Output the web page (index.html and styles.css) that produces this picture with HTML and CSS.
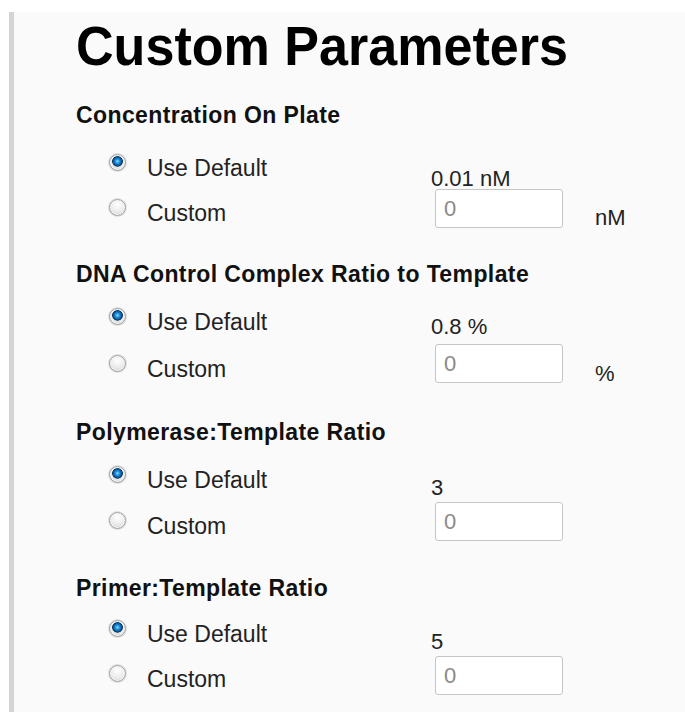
FILE: index.html
```html
<!DOCTYPE html>
<html lang="en">
<head>
<meta charset="utf-8">
<title>Custom Parameters</title>
<link rel="stylesheet" href="styles.css">
</head>
<body>
<div class="panel">
  <h1 class="title">Custom Parameters</h1>

  <section class="param param-conc">
    <h2 class="param-name">Concentration On Plate</h2>
    <div class="param-body">
      <div class="choices">
        <label class="choice"><input class="radio" type="radio" name="conc" checked><span>Use Default</span></label>
        <label class="choice"><input class="radio" type="radio" name="conc"><span>Custom</span></label>
      </div>
      <div class="values">
        <div class="default-value">0.01 nM</div>
        <input class="custom-value" type="text" value="0">
      </div>
      <div class="unit">nM</div>
    </div>
  </section>

  <section class="param param-ctrl">
    <h2 class="param-name">DNA Control Complex Ratio to Template</h2>
    <div class="param-body">
      <div class="choices">
        <label class="choice"><input class="radio" type="radio" name="ctrl" checked><span>Use Default</span></label>
        <label class="choice"><input class="radio" type="radio" name="ctrl"><span>Custom</span></label>
      </div>
      <div class="values">
        <div class="default-value">0.8 %</div>
        <input class="custom-value" type="text" value="0">
      </div>
      <div class="unit">%</div>
    </div>
  </section>

  <section class="param param-poly">
    <h2 class="param-name">Polymerase:Template Ratio</h2>
    <div class="param-body">
      <div class="choices">
        <label class="choice"><input class="radio" type="radio" name="poly" checked><span>Use Default</span></label>
        <label class="choice"><input class="radio" type="radio" name="poly"><span>Custom</span></label>
      </div>
      <div class="values">
        <div class="default-value">3</div>
        <input class="custom-value" type="text" value="0">
      </div>
    </div>
  </section>

  <section class="param param-primer">
    <h2 class="param-name">Primer:Template Ratio</h2>
    <div class="param-body">
      <div class="choices">
        <label class="choice"><input class="radio" type="radio" name="primer" checked><span>Use Default</span></label>
        <label class="choice"><input class="radio" type="radio" name="primer"><span>Custom</span></label>
      </div>
      <div class="values">
        <div class="default-value">5</div>
        <input class="custom-value" type="text" value="0">
      </div>
    </div>
  </section>
</div>
</body>
</html>
```

FILE: styles.css
```css
html, body {
  margin: 0;
  padding: 0;
  background: #ffffff;
  font-family: "Liberation Sans", Arial, sans-serif;
  color: #222;
}

.panel {
  box-sizing: border-box;
  height: 700px;
  margin: 12px 0 0 9px;
  padding: 2px 0 0 62px;
  border-left: 5px solid #d4d4d4;
  background: #fafafa;
  overflow: hidden;
}

.title {
  margin: 0;
  font-size: 56px;
  line-height: 64px;
  font-weight: bold;
  color: #000;
  white-space: nowrap;
  transform: scaleX(0.93);
  transform-origin: left center;
}

/* per-parameter spacing */
.param {
  --top: 32px;
  --head-gap: 22px;
  --row-gap: 20px;
  --value-top: 9px;
  --input-gap: 4px;
  --unit-top: 54px;
  margin-top: var(--top);
}

.param-conc {
  --top: 24px;
  --head-gap: 27px;
  --row-gap: 19px;
  --value-top: 13px;
  --input-gap: -1px;
  --unit-top: 52px;
}

.param-ctrl {
  --top: 32px;
  --head-gap: 22px;
  --row-gap: 21px;
  --value-top: 7px;
  --input-gap: 6px;
  --unit-top: 54px;
}

.param-poly {
  --top: 34px;
  --head-gap: 22px;
  --row-gap: 20px;
  --value-top: 10px;
  --input-gap: 3px;
}

.param-primer {
  --top: 34px;
  --head-gap: 20px;
  --row-gap: 19px;
  --value-top: 10px;
  --input-gap: 3px;
}

.param-name {
  margin: 0;
  font-size: 23px;
  line-height: 26px;
  font-weight: bold;
  letter-spacing: 0.4px;
  color: #111;
}

.param-body {
  display: flex;
  margin: var(--head-gap) 0 0 34px;
}

.choices {
  width: 321px;
  display: flex;
  flex-direction: column;
  gap: var(--row-gap);
}

.choice {
  display: flex;
  align-items: flex-start;
  height: 26px;
  font-size: 23px;
  line-height: 26px;
  color: #222;
}

/* classic bevelled radio button */
.radio {
  appearance: none;
  -webkit-appearance: none;
  box-sizing: border-box;
  width: 17px;
  height: 17px;
  margin: -1px 21px 0 -1px;
  border-radius: 50%;
  border: 1px solid #9f9f9f;
  background: radial-gradient(circle at 50% 30%, #ffffff 0, #ebebeb 55%, #c8c8c8 100%);
  box-shadow: inset 0 0 0 1px #f6f6f6, 0 0 0 1px #e0e0e0;
  flex: none;
}

.radio:checked {
  background:
    radial-gradient(circle at 50% 42%, #8fdcff 0, #2396e0 2px, #0d5fa6 3.8px, #06345f 5px, rgba(6, 52, 95, 0) 5.7px),
    radial-gradient(circle at 50% 30%, #ffffff 0, #ebebeb 55%, #c8c8c8 100%);
}

.values {
  width: 132px;
  display: flex;
  flex-direction: column;
  align-items: flex-start;
}

.default-value {
  margin-top: var(--value-top);
  font-size: 22px;
  line-height: 22px;
  color: #222;
}

.custom-value {
  box-sizing: border-box;
  width: 128px;
  height: 39px;
  margin: var(--input-gap) 0 0 4px;
  padding: 0 8px;
  border: 1px solid #c6c6c6;
  border-radius: 3px;
  background: #fff;
  font-family: "Liberation Sans", Arial, sans-serif;
  font-size: 22px;
  color: #8a8a8a;
  outline: none;
}

.unit {
  margin: var(--unit-top) 0 0 32px;
  font-size: 22px;
  line-height: 22px;
  color: #222;
}
```
